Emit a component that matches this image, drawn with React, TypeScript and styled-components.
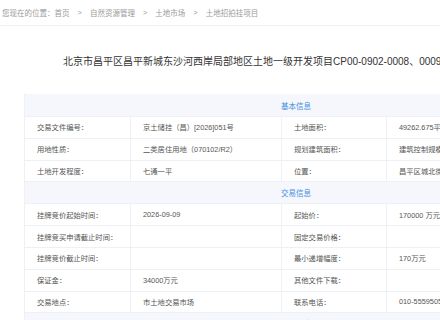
import React from "react";
import styled, { createGlobalStyle } from "styled-components";

const GlobalStyle = createGlobalStyle`
  html, body {
    margin: 0;
    padding: 0;
    background: #ffffff;
    overflow: hidden;
  }
  body {
    font-family: "Liberation Sans", "Noto Sans CJK SC", sans-serif;
  }
`;

const Page = styled.div`
  width: 600px;
  background: #fff;
`;

const Breadcrumb = styled.div`
  display: flex;
  align-items: center;
  height: 25px;
  padding-left: 2px;
  border-bottom: 1px solid #f0f0f0;
  font-size: 7.5px;
  color: #9a9a9a;
  white-space: nowrap;
`;

const Sep = styled.span`
  margin: 0 8px;
`;

const Title = styled.h1`
  margin: 0;
  padding: 29px 0 25px 63px;
  font-size: 10px;
  line-height: 14px;
  font-weight: normal;
  color: #333;
  white-space: nowrap;
`;

const Table = styled.div`
  margin-left: 24px;
  width: 542px;
  display: grid;
  grid-template-columns: 106px 151px 105px 180px;
  border-left: 1px solid #eef0f5;
  box-sizing: border-box;
`;

const SectionHead = styled.div<{ $h: number }>`
  grid-column: 1 / -1;
  height: ${(p) => p.$h}px;
  display: flex;
  align-items: center;
  justify-content: center;
  background: #f5f7fc;
  color: #3f8fe0;
  font-size: 7.5px;
  border-bottom: 1px solid #eef0f5;
  box-sizing: border-box;
`;

const Cell = styled.div<{ $label?: boolean }>`
  height: 21.8px;
  display: flex;
  align-items: center;
  padding-left: 12px;
  box-sizing: border-box;
  border-bottom: 1px solid #eef0f5;
  border-right: 1px solid #eef0f5;
  font-size: 7.3px;
  color: ${(p) => (p.$label ? "#555" : "#555")};
  white-space: nowrap;
  overflow: hidden;
  background: #fff;
`;

type Row = [string, string, string, string];

const basic: Row[] = [
  ["交易文件编号：", "京土储挂（昌）[2026]051号", "土地面积：", "49262.675平方米"],
  ["用地性质：", "二类居住用地（070102/R2）", "规划建筑面积：", "建筑控制规模"],
  ["土地开发程度：", "七通一平", "位置：", "昌平区城北街道"],
];

const trade: Row[] = [
  ["挂牌竞价起始时间：", "2026-09-09", "起始价：", "170000 万元"],
  ["挂牌竞买申请截止时间：", "", "固定交易价格：", ""],
  ["挂牌竞价截止时间：", "", "最小递增幅度：", "170万元"],
  ["保证金：", "34000万元", "其他文件下载：", ""],
  ["交易地点：", "市土地交易市场", "联系电话：", "010-55595050"],
];

const renderRows = (rows: Row[]) =>
  rows.map((r, i) => (
    <React.Fragment key={i}>
      <Cell $label>{r[0]}</Cell>
      <Cell>{r[1]}</Cell>
      <Cell $label>{r[2]}</Cell>
      <Cell>{r[3]}</Cell>
    </React.Fragment>
  ));

export default function App() {
  return (
    <Page>
      <GlobalStyle />
      <Breadcrumb>
        <span>您现在的位置：首页</span>
        <Sep>&gt;</Sep>
        <span>自然资源管理</span>
        <Sep>&gt;</Sep>
        <span>土地市场</span>
        <Sep>&gt;</Sep>
        <span>土地招拍挂项目</span>
      </Breadcrumb>
      <Title>北京市昌平区昌平新城东沙河西岸局部地区土地一级开发项目CP00-0902-0008、0009地块</Title>
      <Table>
        <SectionHead $h={23}>基本信息</SectionHead>
        {renderRows(basic)}
        <SectionHead $h={22}>交易信息</SectionHead>
        {renderRows(trade)}
        <SectionHead $h={22}>其他信息</SectionHead>
      </Table>
    </Page>
  );
}
